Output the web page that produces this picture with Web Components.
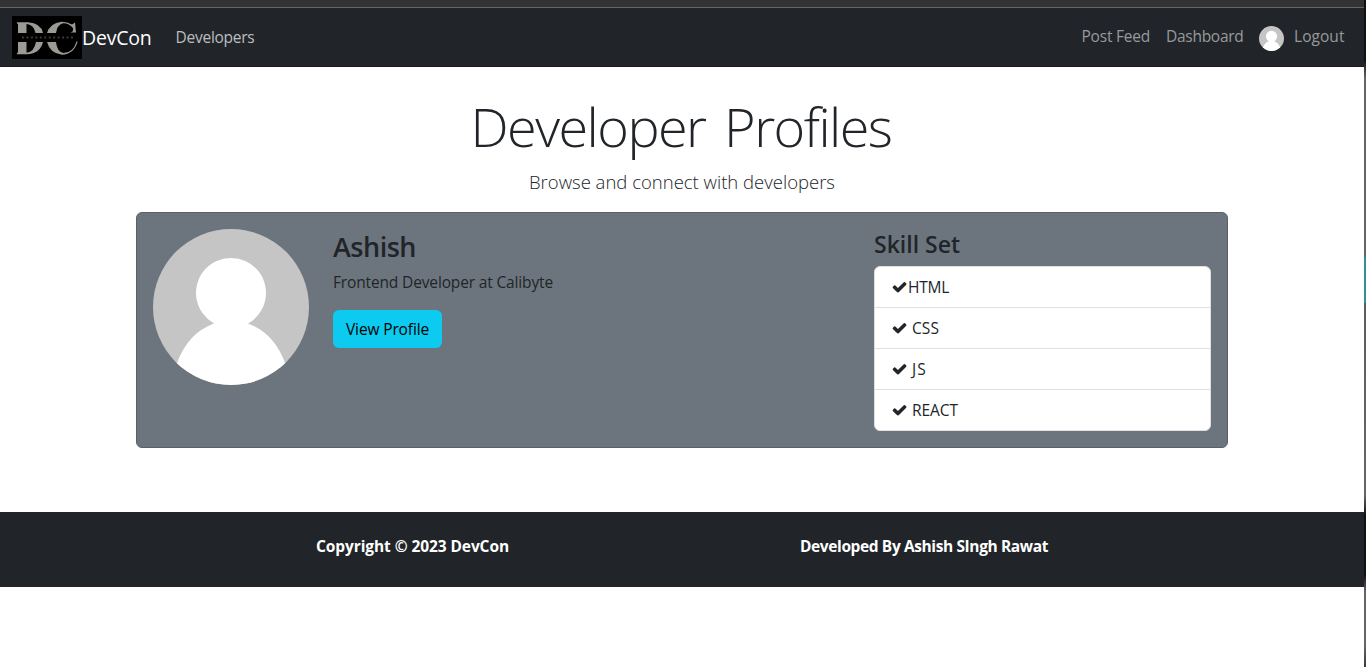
<!DOCTYPE html>
<html lang="en">
<head>
<meta charset="utf-8">
<title>DevCon</title>
<style>
body{margin:0;width:1366px;height:667px;overflow:hidden;background:#fff;color:#212529;font:15.5px/24px "Open Sans","Noto Sans",sans-serif}
</style>
</head>
<body>
<dev-app></dev-app>
<script>
function define(name, html, setup){
  const t=document.createElement('template');t.innerHTML=html;
  customElements.define(name,class extends HTMLElement{
    connectedCallback(){
      if(this.shadowRoot)return;
      this.attachShadow({mode:'open'}).append(t.content.cloneNode(true));
      if(setup)setup(this,this.shadowRoot);
    }
  });
}

/* Single line of text whose tracking is adjusted to fill the given width. */
define('fit-text',`<style>:host{display:inline-block;white-space:nowrap}span{display:inline-block}</style><span><slot></slot></span>`,(el,root)=>{
  const s=root.querySelector('span'),w=+el.getAttribute('width');
  const n=el.textContent.length;
  el.style.width=w+'px';
  s.style.letterSpacing=((w-s.getBoundingClientRect().width)/n).toFixed(3)+'px';
});

define('user-avatar',`<style>:host{display:block;flex:none}svg{display:block;width:100%;height:100%}</style>
<svg viewBox="0 0 156 156"><defs><clipPath id="c"><circle cx="78" cy="78" r="78"/></clipPath></defs>
<g clip-path="url(#c)"><rect width="156" height="156" fill="#c5c5c5"/><path fill="#fff" d="M61 94.500A35 35 0 1 1 95 94.500Q121 104 132 134L140 156H16L24 134Q35 104 61 94.500Z"/></g></svg>`);

define('brand-logo',`<style>:host{display:block;width:70px;height:43px;background:#000}svg{display:block}</style>
<svg width="70" height="43" viewBox="0 0 70 43">
<g fill="#9b9a95">
<path d="M5 6.200H16Q29 7 31 17H23.500Q22 9 15 8H14.500V17H6V8L5 7.500Z"/>
<path d="M6 26H14.500V36.500H15Q22 36 24 26H31Q28 37.800 15 38.200H5V37L6 36.500Z"/>
<path d="M35 17Q38 7 49.500 5.700Q55 5.500 60 8.500L63 6.500L64 16.500H58Q62 16 61 12Q57 7 51 7.200Q45 9 44 17Z"/>
<path d="M35 26H44Q45 36 51.500 37Q61 37 64.500 25.500H65.700Q62 38.200 50 38.700Q38 37.500 35 26Z"/>
</g>
<path d="M10 21.500H61" stroke="#4a342e" stroke-width="2" stroke-dasharray="2 2.450"/></svg>`);

define('site-nav',`<style>
:host{display:flex;align-items:flex-start;box-sizing:border-box;width:1364px;height:59px;padding:8px 12px 0;background:#212529;border-bottom:1px solid #1b1a22;color:#989a9c}
.brand{display:flex;color:#fff;font-size:19.500px;line-height:30px}
.brand fit-text{margin-top:7px}
.dev{margin:9px 0 0 24px;line-height:24px;color:#bcbebf}
nav{display:flex;margin:8px 7.500px 0 auto}
a+a{margin-left:16px}
.out{display:flex}
user-avatar{width:25px;height:25px;margin:2px 10.500px 0 -1px}
</style>
<div class="brand"><brand-logo></brand-logo><fit-text width="69.500">DevCon</fit-text></div>
<div class="dev"><fit-text width="79">Developers</fit-text></div>
<nav><a><fit-text width="68.500">Post Feed</fit-text></a><a><fit-text width="77.500">Dashboard</fit-text></a><a class="out"><user-avatar></user-avatar><fit-text width="50.500">Logout</fit-text></a></nav>`);

define('skill-item',`<style>:host{display:flex;align-items:center;height:40px;padding-left:17px;border-top:1px solid #dfdfdf}
:host(:first-child){border-top:0}svg{margin-right:var(--gap,4px)}</style>
<svg width="16" height="16" viewBox="50 0 1792 1792"><path fill="currentColor" d="M1671 566q0 40-28 68l-724 724-136 136q-28 28-68 28t-68-28l-136-136-362-362q-28-28-28-68t28-68l136-136q28-28 68-28t68 28l294 295 656-657q28-28 68-28t68 28l136 136q28 28 28 68z"/></svg><slot></slot>`);

define('profile-card',`<style>
:host{display:grid;grid-template-columns:156px 517px 337px;column-gap:24px;box-sizing:border-box;width:1092px;height:236px;margin:0 auto;padding:16px;border:1px solid #596068;border-radius:6px;background:#6c757d}
user-avatar{width:156px;height:156px}
h2{margin:1px 0 6px;font-size:27px;font-weight:600;line-height:34px}
p{margin:0 0 16px;line-height:24px}
button{display:block;width:109px;height:38px;padding:0 0 0 13px;border:0;border-radius:6px;background:#0dcaf0;color:#000;font:inherit;text-align:left}
h4{margin:1px 0 7px;font-size:23px;font-weight:600;line-height:29px}
.list{box-sizing:border-box;height:165px;border:1px solid #dfdfdf;border-radius:6px;background:#fff;overflow:hidden}
</style>
<user-avatar></user-avatar>
<div><h2><fit-text width="83">Ashish</fit-text></h2><p><fit-text width="220">Frontend Developer at Calibyte</fit-text></p><button><fit-text width="83">View Profile</fit-text></button></div>
<div><h4><fit-text width="86">Skill Set</fit-text></h4><div class="list">
<skill-item style="--gap:0px"><fit-text width="41">HTML</fit-text></skill-item>
<skill-item><fit-text width="27">CSS</fit-text></skill-item>
<skill-item><fit-text width="15">JS</fit-text></skill-item>
<skill-item><fit-text width="46">REACT</fit-text></skill-item></div></div>`);

define('page-heading',`<style>:host{display:flex;flex-direction:column;align-items:center;height:145px;box-sizing:border-box;padding-top:26px;font-weight:300}
h1{margin:0 2px 7px 0;font-size:54px;line-height:67px;font-weight:300;word-spacing:6px}p{margin:0;font-size:18.500px;line-height:30px}</style>
<h1><fit-text width="421">Developer Profiles</fit-text></h1><p><fit-text width="306">Browse and connect with developers</fit-text></p>`);

define('site-footer',`<style>:host{display:flex;justify-content:center;gap:291px;width:1364px;height:53px;padding-top:22px;margin-top:64px;background:#212529;color:#fff;font-weight:700;font-size:15.500px}</style>
<fit-text width="193">Copyright © 2023 DevCon</fit-text><fit-text width="248">Developed By Ashish SIngh Rawat</fit-text>`);

define('dev-app',`<style>
:host{display:grid;grid-template-columns:1364px 2px;height:667px}
.top{height:7px;background:#333;border-bottom:1px solid #666}
.edge{background:linear-gradient(#111 0,#111 60px,#666 78px,#666 257px,#2e9294 257px,#2e9294 303px,#5d5d5d 303px,#666 495px,#111 515px,#111 575px,#666 592px,#666 645px,#3a3a3a 667px)}
</style>
<main><div class="top"></div><site-nav></site-nav><page-heading></page-heading><profile-card></profile-card><site-footer></site-footer></main><div class="edge"></div>`);
</script>
</body>
</html>
